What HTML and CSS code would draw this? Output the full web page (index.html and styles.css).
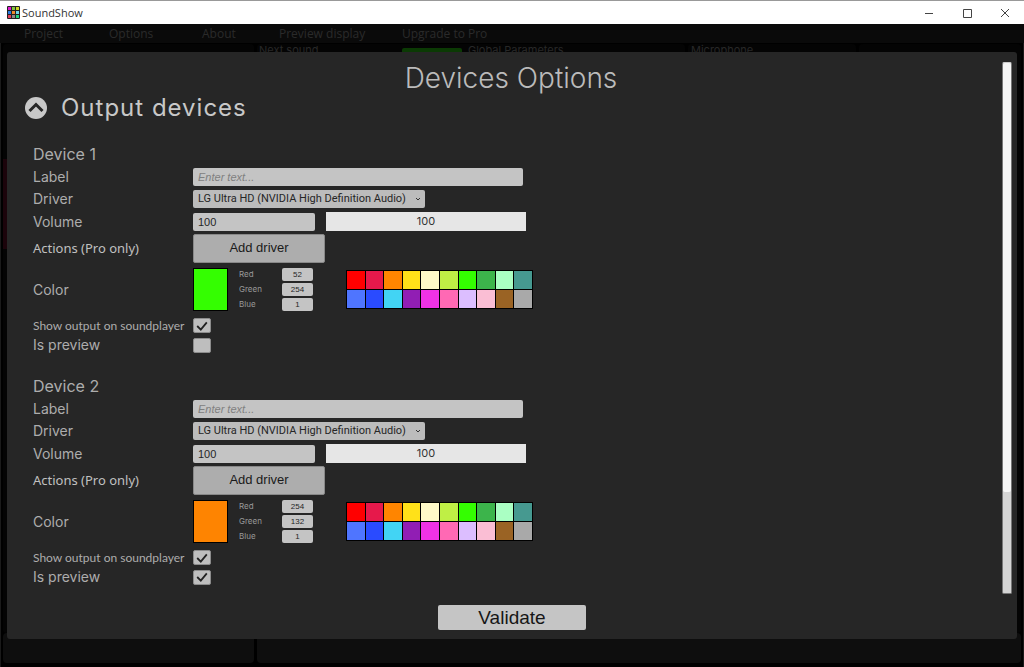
FILE: index.html
```html
<!DOCTYPE html>
<html lang="en">
<head>
<meta charset="utf-8">
<title>SoundShow</title>
<link rel="stylesheet" href="styles.css">
</head>
<body>
<div class="window">
  <header class="titlebar">
    <svg class="app-icon" viewBox="0 0 13 13" aria-hidden="true">
      <rect width="13" height="13" rx="1" fill="#222"/>
      <rect x="1" y="1" width="3" height="3" fill="#e01bd0"/><rect x="5" y="1" width="3" height="3" fill="#7fc241"/><rect x="9" y="1" width="3" height="3" fill="#c8d826"/>
      <rect x="1" y="5" width="3" height="3" fill="#2a7be0"/><rect x="5" y="5" width="3" height="3" fill="#f08a2c"/><rect x="9" y="5" width="3" height="3" fill="#6fd6e8"/>
      <rect x="1" y="9" width="3" height="3" fill="#e0405a"/><rect x="5" y="9" width="3" height="3" fill="#8a8a8a"/><rect x="9" y="9" width="3" height="3" fill="#1fd67a"/>
    </svg>
    <span class="app-name">SoundShow</span>
    <div class="window-buttons">
      <button type="button" aria-label="Minimize"><svg viewBox="0 0 10 10"><path d="M1 5.500h8"/></svg></button>
      <button type="button" aria-label="Maximize"><svg viewBox="0 0 10 10"><path d="M1.500 1.500h8v8h-8z"/></svg></button>
      <button type="button" aria-label="Close"><svg viewBox="0 0 10 10"><path d="M1 1l8 8M9 1l-8 8"/></svg></button>
    </div>
  </header>
  <nav class="menu">
    <a href="#project">Project</a><a href="#options">Options</a><a href="#about">About</a><a href="#preview">Preview display</a><a href="#upgrade">Upgrade to Pro</a>
  </nav>
  <main class="stage">
    <section class="panel panel-list"></section>
    <section class="panel panel-sound"><span>Next sound</span><i class="go"></i><span>Global Parameters</span></section>
    <section class="panel panel-mic"><span>Microphone</span></section>
    <section class="panel panel-clock"></section>
    <section class="panel panel-foot-left"></section>
    <section class="panel panel-foot"></section>
  </main>

  <div class="dialog" role="dialog" aria-labelledby="dialog-title">
    <h1 class="dialog-title" id="dialog-title">Devices Options</h1>
    <div class="dialog-body">
      <h2 class="section-title">
        <button type="button" class="collapse" aria-label="Collapse output devices"><svg viewBox="0 0 22 22"><circle cx="11" cy="11" r="11" fill="#c8c8c8"/><path d="M4.500 14L11 7.500l6.500 6.500" fill="none" stroke="#262626" stroke-width="3"/></svg></button>
        <span>Output devices</span>
      </h2>
      <div class="devices" id="devices"></div>
    </div>
    <div class="scrollbar" aria-hidden="true"><div class="scroll-thumb"></div></div>
    <button type="button" class="validate">Validate</button>
  </div>
</div>
<script src="devices.js"></script>
</body>
</html>
```
FILE: devices.js
```js
const palette = [
  "#ff0000", "#e6194b", "#ff8500", "#ffe119", "#fffac8", "#bfef45", "#34fe01", "#3cb44b", "#aaffc3", "#469990",
  "#4f75ff", "#2a4bff", "#42d4f4", "#911eb4", "#f032e6", "#ff69b4", "#dcbeff", "#fabed4", "#9a6324", "#a9a9a9"
];
const devices = [
  { name: "Device 1", color: [52, 254, 1], show: true, preview: false },
  { name: "Device 2", color: [254, 132, 1], show: true, preview: true }
];

const deviceForm = (d, n) => `
<form class="device">
  <h3 class="device-name">${d.name}</h3>
  <div class="row"><label for="label${n}">Label</label><input class="field field-label" id="label${n}" type="text" placeholder="Enter text..."></div>
  <div class="row"><label for="driver${n}">Driver</label>
    <span class="select-wrap"><select class="field driver" id="driver${n}"><option>LG Ultra HD (NVIDIA High Definition Audio)</option></select>
    <svg class="chevron" viewBox="0 0 6 6"><path d="M1 2l2 2 2-2"/></svg></span></div>
  <div class="row row-volume"><label for="volume${n}">Volume</label>
    <span class="volume"><input class="field volume-value" id="volume${n}" type="text" value="100">
    <span class="slider-wrap"><input class="slider" type="range" min="0" max="100" value="100" aria-label="Volume level"><output class="slider-value">100</output></span></span></div>
  <div class="row row-actions"><span class="actions-label">Actions (Pro only)</span><button type="button" class="add-driver">Add driver</button></div>
  <div class="row row-color"><span>Color</span>
    <div class="color">
      <div class="swatch" style="background:rgb(${d.color.join(",")})"></div>
      <div class="channels">${["Red", "Green", "Blue"].map((c, i) =>
        `<label for="${c}${n}">${c}</label><input class="field channel" id="${c}${n}" type="text" value="${d.color[i]}">`).join("")}</div>
      <div class="palette">${palette.map(c => `<button type="button" aria-label="${c}" style="background:${c}"></button>`).join("")}</div>
    </div></div>
  <div class="row row-show"><label for="show${n}">Show output on soundplayer</label><input class="check" id="show${n}" type="checkbox" ${d.show ? "checked" : ""}></div>
  <div class="row row-preview"><label for="preview${n}">Is preview</label><input class="check" id="preview${n}" type="checkbox" ${d.preview ? "checked" : ""}></div>
</form>`;

document.getElementById("devices").innerHTML = devices.map((d, i) => deviceForm(d, i + 1)).join("");
```
FILE: styles.css
```css
* { box-sizing: border-box; }
body { margin: 0; background: #000; font-family: Inter, "Open Sans", sans-serif; color: #adadad; }
button, input, select { margin: 0; padding: 0; border: 0; border-radius: 0; font: inherit; color: inherit; background: none; }
h1, h2, h3 { margin: 0; font-weight: 400; }

.window { position: relative; height: 100vh; display: flex; flex-direction: column; overflow: hidden; }
.titlebar { flex: none; height: 24px; display: flex; align-items: center; gap: 2px; padding-left: 7px; background: #fff; border-top: 1px solid #999; color: #333; }
.app-icon { width: 13px; height: 13px; }
.app-name { font: 11px/16px "Open Sans", sans-serif; }
.window-buttons { margin-left: auto; display: flex; }
.window-buttons button { width: 38px; height: 22px; display: grid; place-items: center; }
.window-buttons svg { width: 10px; height: 10px; fill: none; stroke: #444; stroke-width: 1; }
.menu { flex: none; height: 19px; display: grid; grid-template-columns: 85px 93px 77px 123px 1fr; align-items: center; padding-left: 24px; background: #0a0a0a; font: 12px/18px "Open Sans", sans-serif; }
.menu a { color: #2a2a2a; text-decoration: none; }

.stage { flex: 1; display: grid; grid-template-columns: 251px 428fr 168fr 162fr; grid-template-rows: 1fr 30px; column-gap: 3px; padding: 1px 2px 4px; border-left: 1px solid #1a1a1a; border-right: 1px solid #1a1a1a; }
.panel { background: #040404; border-radius: 4px; color: #282828; font-size: 11px; line-height: 12px; }
.panel-list { background: linear-gradient(#040404 115px, #1c040b 115px 205px, #040404 205px); }
.panel-sound { display: flex; align-items: flex-start; padding-left: 2px; }
.panel-sound span:first-child { width: 143px; }
.go { width: 60px; height: 10px; margin: 4px 6px 0 0; border-radius: 2px; background: #0b3a04; }
.panel-mic { padding-left: 3px; }
.panel-foot-left, .panel-foot { background: #0e0e0e; }
.panel-foot { grid-column: 2 / 5; }

.dialog { position: absolute; inset: 52px 7px 28px; display: grid; grid-template-columns: 1fr 10px; grid-template-rows: 42px 1fr 45px; padding: 0 5px 0 0; background: #262626; border-radius: 3px; }
.dialog-title { grid-area: 1 / 1 / 2 / 3; justify-self: center; padding-left: 3px; padding-top: 10px; font-size: 28px; line-height: 32px; font-weight: 300; color: #bbb; }
.dialog-body { grid-area: 2 / 1; min-height: 0; overflow: hidden; }
.section-title { display: flex; align-items: center; gap: 14px; padding-left: 18px; height: 28px; font-size: 24px; line-height: 28px; color: #c8c8c8; letter-spacing: 1px; }
.collapse, .collapse svg { display: block; width: 22px; height: 22px; }
.scrollbar { grid-area: 1 / 2 / 3 / 3; margin: 10px 0 0; background: #d4d4d4; border: 1px solid #777; border-top-color: #ccc; border-radius: 2px; }
.scroll-thumb { height: 81%; background: #f5f5f5; border-radius: 2px; }
.validate { grid-area: 3 / 1 / 4 / 3; place-self: start center; width: 148px; height: 25px; margin: 11px 0 0 5px; background: #c5c5c5; border-radius: 2px; font: 19px/24px "Liberation Sans", sans-serif; color: #161616; }

.devices { display: grid; gap: 20px; padding: 21px 26px 0; }
.device-name { height: 23px; font-size: 16px; line-height: 23px; }
.row { display: grid; grid-template-columns: 160px 1fr; align-items: center; justify-items: start; height: 22px; font-size: 14px; line-height: 18px; }
.row-volume { height: 23px; }
.row-actions { height: 30px; }
.row-color { height: 53px; }
.row-show { height: 19px; font-family: Lato, sans-serif; font-size: 12px; white-space: nowrap; }
.row-preview { height: 20px; }
.actions-label { font-family: "Noto Sans", sans-serif; font-size: 13px; color: #c0c0c0; }

.field { height: 18px; padding: 0 5px; background: #c4c4c4; border-radius: 2px; color: #262626; }
.field-label { width: 330px; font: 11px/18px "Liberation Sans", sans-serif; }
.field-label::placeholder { color: #808080; font-style: italic; }
.select-wrap { position: relative; display: block; height: 18px; }
.driver { width: 232px; display: block; appearance: none; background: #bcbcbc; font: 11px/18px Roboto, sans-serif; }
.chevron { position: absolute; right: 4px; top: 6px; width: 6px; height: 6px; fill: none; stroke: #333; pointer-events: none; }
.volume { display: flex; align-items: center; gap: 11px; }
.volume-value { width: 122px; font: 11px/18px "Liberation Sans", sans-serif; }
.slider-wrap { position: relative; display: block; width: 200px; height: 19px; }
.slider { display: block; width: 100%; height: 100%; appearance: none; background: #e6e6e6; }
.slider::-webkit-slider-thumb { appearance: none; width: 1px; height: 19px; background: #e6e6e6; }
.slider-value { position: absolute; inset: 0; text-align: center; font-size: 11px; line-height: 19px; color: #333; pointer-events: none; }
.add-driver { width: 132px; height: 29px; background: #adadad; border: 1px solid #888; border-radius: 2px; font: 13px/26px "Liberation Sans", sans-serif; color: #1a1a1a; }

.color { display: flex; align-items: center; }
.swatch { width: 35px; height: 43px; border: 1px solid #000; }
.channels { display: grid; grid-template-columns: 43px 31px; row-gap: 2px; align-items: center; margin: 0 33px 0 11px; font-size: 8px; line-height: 13px; color: #999; }
.channel { width: 31px; height: 13px; padding: 0; text-align: center; font: 8px/13px "Liberation Sans", sans-serif; }
.palette { display: grid; grid-template-columns: repeat(10, 1fr); gap: 1px; width: 187px; padding: 1px; background: #000; }
.palette button { height: 18px; }
.check { appearance: none; width: 18px; height: 15px; background: #bebebe center / 12px 12px no-repeat; border: 1px solid #8c8c8c; border-radius: 2px; }
.check:checked { background-image: url("data:image/svg+xml,%3Csvg xmlns='http://www.w3.org/2000/svg' viewBox='0 0 10 10'%3E%3Cpath d='M1 5l3 3 5-6' fill='none' stroke='%23222' stroke-width='1.500'/%3E%3C/svg%3E"); }
```
